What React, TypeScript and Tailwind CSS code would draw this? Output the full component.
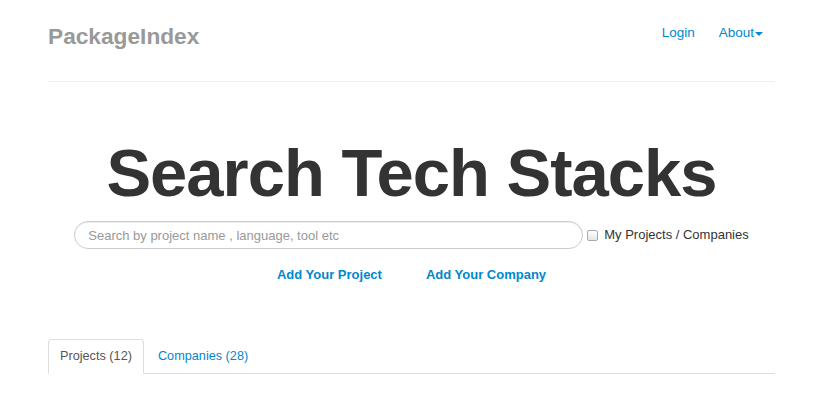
import React from 'react';

const App: React.FC = () => {
  return (
    <div className="min-h-[400px] bg-white font-['Liberation_Sans',Arial,sans-serif] text-[13px] text-[#333]">
      <div className="ml-[48px] w-[727px]">
        {/* Header */}
        <header className="flex h-[82px] items-start justify-between border-b border-[#eee] pt-[22px]">
          <a className="text-[22.7px] font-bold leading-[28px] text-[#999]">PackageIndex</a>
          <nav className="mt-[1px] mr-[12px] flex items-center gap-[24px] text-[13.5px] leading-[20px] text-[#0088cc]">
            <a>Login</a>
            <a className="flex items-center">
              About
              <span className="ml-[1px] mt-[2px] h-0 w-0 border-x-[4px] border-t-[4px] border-x-transparent border-t-[#0088cc]"></span>
            </a>
          </nav>
        </header>

        {/* Hero */}
        <h1 className="mt-[57px] text-center text-[67px] font-bold leading-none tracking-[-1px] text-[#333]">
          Search Tech Stacks
        </h1>

        <div className="mt-[15px] flex items-center justify-center">
          <input
            type="text"
            placeholder="Search by project name , language, tool etc"
            className="h-[28px] w-[509px] rounded-full border border-[#ccc] px-[13px] text-[13px] text-[#555] placeholder:text-[#999] shadow-[inset_0_1px_1px_rgba(0,0,0,0.075)] outline-none"
          />
          <span className="ml-[4px] h-[11px] w-[11px] rounded-[2px] border border-[#aaa] bg-gradient-to-b from-white to-[#e6e6e6]"></span>
          <label className="ml-[6px] leading-[20px] text-[#333]">My Projects / Companies</label>
        </div>

        <div className="mt-[16px] flex justify-center gap-[44px] text-[13px] font-bold leading-[20px] text-[#0088cc]">
          <a>Add Your Project</a>
          <a>Add Your Company</a>
        </div>

        {/* Tabs */}
        <ul className="mt-[54px] flex border-b border-[#ddd] text-[12.7px] leading-[20px]">
          <li className="-mb-px mr-[2px] rounded-t-[4px] border border-[#ddd] border-b-white bg-white px-[11px] pt-[6px] pb-[7px] text-[#555]">
            Projects (12)
          </li>
          <li className="-mb-px mr-[2px] rounded-t-[4px] border border-transparent px-[11px] pt-[6px] pb-[7px] text-[#0088cc]">
            Companies (28)
          </li>
        </ul>
      </div>
    </div>
  );
};

export default App;
